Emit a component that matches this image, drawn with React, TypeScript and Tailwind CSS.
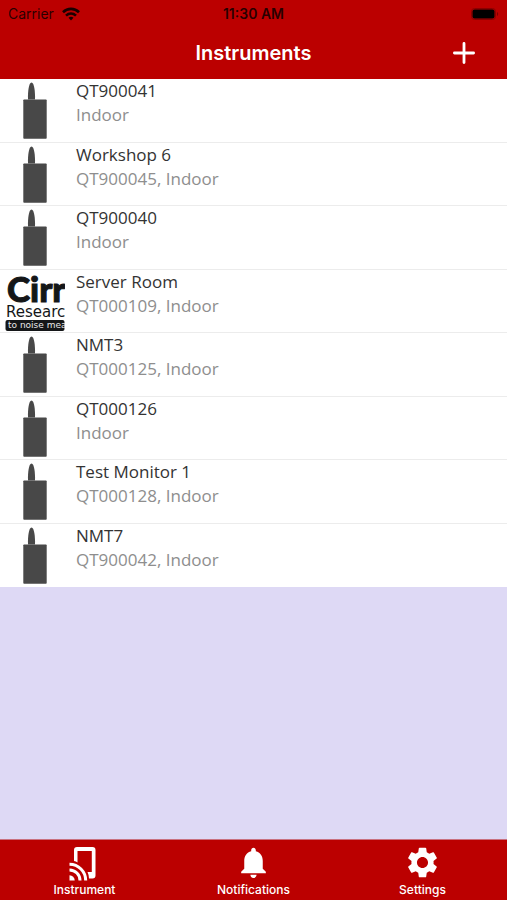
import { MdNotifications, MdSettings } from "react-icons/md";

type Instrument = { name: string; detail: string; logo?: boolean };

const instruments: Instrument[] = [
  { name: "QT900041", detail: "Indoor" },
  { name: "Workshop 6", detail: "QT900045, Indoor" },
  { name: "QT900040", detail: "Indoor" },
  { name: "Server Room", detail: "QT000109, Indoor", logo: true },
  { name: "NMT3", detail: "QT000125, Indoor" },
  { name: "QT000126", detail: "Indoor" },
  { name: "Test Monitor 1", detail: "QT000128, Indoor" },
  { name: "NMT7", detail: "QT900042, Indoor" },
];

// Phone outline with cast waves in the lower left corner
function InstrumentIcon({ size, className }: { size: number; className?: string }) {
  return (
    <svg width={size} height={size} viewBox="6 4 37 37" fill="none" className={className} aria-hidden="true">
      <path
        d="M14 21V10Q14 7 17 7H32.500Q35.500 7 35.500 10V35.500Q35.500 38.500 32.500 38.500H29Q28.800 34.500 27.500 32H31.800V11H17.500V22.500Q16 21.300 14 21Z"
        fill="currentColor"
      />
      <path d="M9.500 24.200A16.200 16.200 0 0 1 25.700 40.400M9.500 29.900A10.500 10.500 0 0 1 20 40.400" stroke="currentColor" strokeWidth="3" />
      <path d="M9.500 35.200A5.200 5.200 0 0 1 14.700 40.400H9.500Z" fill="currentColor" />
    </svg>
  );
}

const tabs = [
  { label: "Instrument", icon: InstrumentIcon },
  { label: "Notifications", icon: MdNotifications },
  { label: "Settings", icon: MdSettings },
];

function MonitorIcon() {
  return (
    <svg width="24" height="57" viewBox="0 0 24 57" className="ml-[23px] mt-[3px] shrink-0" fill="#484848" aria-hidden="true">
      <path d="M5 17.500C4.700 10 5.800 0.500 8.500 0.500C11.200 0.500 12.300 10 12 17.500Z" />
      <rect x="0.300" y="17.500" width="23.400" height="39.300" rx="0.800" />
    </svg>
  );
}

// Company logo, cropped on the right by the thumbnail box
function CirrusLogo() {
  return (
    <svg width="60" height="57" viewBox="0 0 60 57" className="ml-[5px] mt-[5px] shrink-0" role="img" aria-label="Cirrus Research">
      <g fill="#141618">
        <text x="2" y="27" fontFamily="Lato, sans-serif" fontWeight="900" fontSize="35" stroke="#141618">
          Cirr
        </text>
        <text x="1" y="42" fontFamily="'DejaVu Sans', sans-serif" fontSize="15">
          Researc
        </text>
        <rect x="0.500" y="45" width="59" height="11" rx="2" />
      </g>
      <text x="3" y="53" fill="#e8e8e8" fontFamily="'DejaVu Sans', sans-serif" fontSize="9">
        to noise mea
      </text>
    </svg>
  );
}

function StatusBar() {
  return (
    <div className="grid h-[27px] grid-cols-3 items-center px-2 text-sm text-black/80">
      <div className="flex items-center gap-2">
        <span>Carrier</span>
        <svg width="18" height="14" viewBox="0 0 18 14" fill="none" stroke="#1a0000" strokeWidth="2.600" aria-hidden="true">
          <path d="M1 5.200C5.500 0.800 12.500 0.800 17 5.200" />
          <path d="M4 8.600C7 5.800 11 5.800 14 8.600" />
          <path d="M6.500 10.800C8 9.500 10 9.500 11.500 10.800L9 13.500Z" fill="#1a0000" stroke="none" />
        </svg>
      </div>
      <span className="text-center font-semibold">11:30 AM</span>
      <svg width="28" height="12" viewBox="0 0 28 12" className="justify-self-end" aria-hidden="true">
        <rect x="0.500" y="0.500" width="24" height="11" rx="3" fill="none" stroke="#8a0000" />
        <rect x="1.500" y="1.500" width="22" height="9" rx="2" fill="#000" />
        <path d="M26 4c1.600 0.500 1.600 3.500 0 4z" fill="#7a0000" />
      </svg>
    </div>
  );
}

export default function App() {
  return (
    <div className="flex min-h-screen flex-col bg-[#ded9f5] font-[Inter,sans-serif]">
      <header className="bg-[#bb0000]">
        <StatusBar />
        <div className="grid h-[52px] grid-cols-[1fr_auto_1fr] items-center px-8">
          <h1 className="col-start-2 text-xl font-semibold text-white">Instruments</h1>
          <button type="button" aria-label="Add instrument" className="justify-self-end">
            <svg width="22" height="22" viewBox="0 0 22 22" stroke="#fff" strokeWidth="2.800" strokeLinecap="round" aria-hidden="true">
              <path d="M11 1.400V20.600M1.400 11H20.600" />
            </svg>
          </button>
        </div>
      </header>

      <main className="flex-1">
        <ul className="bg-white">
          {instruments.map((item) => (
            <li
              key={item.name}
              className="flex border-b border-[#ececec] font-['Open_Sans',sans-serif] text-[17px] leading-6 last:border-white odd:h-16 even:h-[63px]"
            >
              <div className="w-[76px] shrink-0">{item.logo ? <CirrusLogo /> : <MonitorIcon />}</div>
              <div>
                <p className="text-[#333333]">{item.name}</p>
                <p className="text-[#8e8e8e]">{item.detail}</p>
              </div>
            </li>
          ))}
        </ul>
      </main>

      <nav className="grid grid-cols-3 border-t border-[#c9707f] bg-[#bb0000] text-white">
        {tabs.map(({ label, icon: Icon }) => (
          <a key={label} href={`#${label.toLowerCase()}`} className="flex h-[60px] flex-col items-center pt-1">
            <Icon size={37} className="shrink-0" aria-hidden="true" />
            <span className="text-xs leading-[18px] font-medium">{label}</span>
          </a>
        ))}
      </nav>
    </div>
  );
}
